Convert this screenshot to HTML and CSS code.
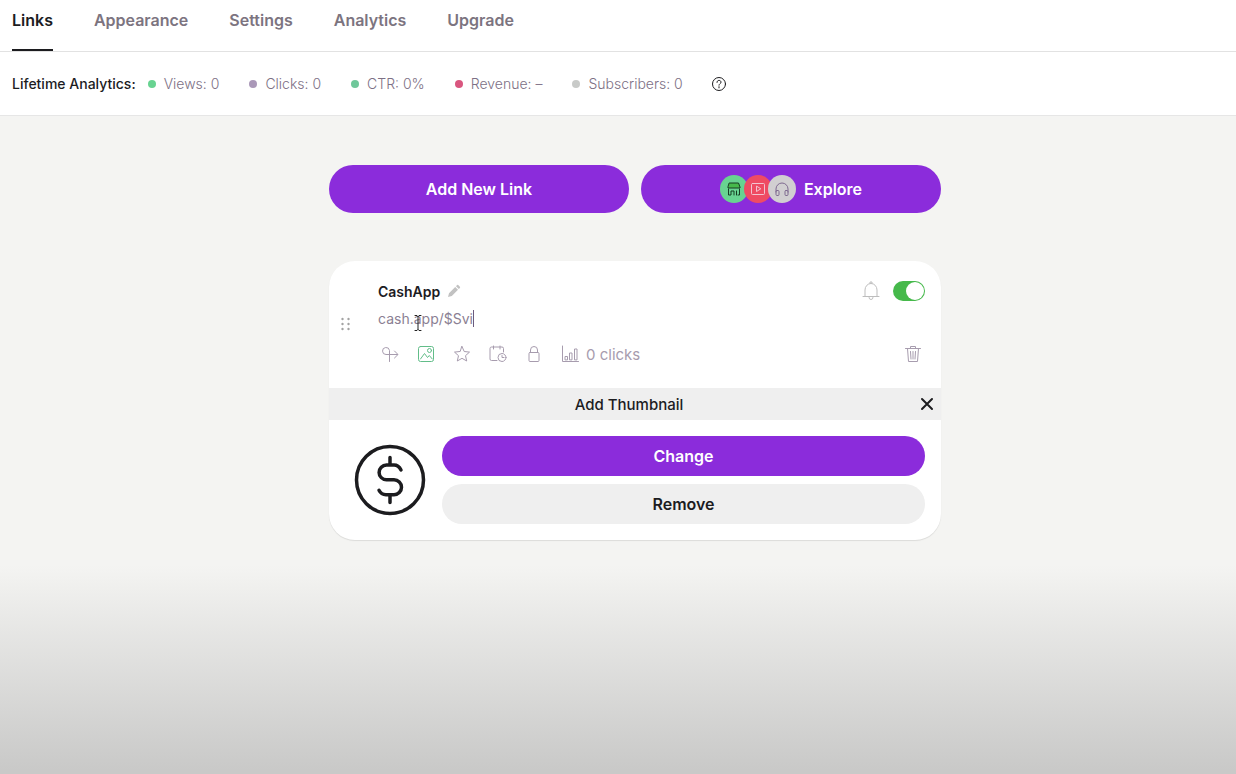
FILE: index.html
```html
<!DOCTYPE html>
<html lang="en">
<head>
    <meta charset="UTF-8">
    <meta name="viewport" content="width=device-width, initial-scale=1.0">
    <title>Links</title>
    <link rel="stylesheet" href="styles.css">
</head>
<body>
    <nav class="tabs">
        <a href="#links" class="active">Links</a>
        <a href="#appearance">Appearance</a>
        <a href="#settings">Settings</a>
        <a href="#analytics">Analytics</a>
        <a href="#upgrade">Upgrade</a>
    </nav>

    <section class="stats">
        <h2>Lifetime Analytics:</h2>
        <ul>
            <li class="green">Views: 0</li>
            <li class="purple">Clicks: 0</li>
            <li class="teal">CTR: 0%</li>
            <li class="red">Revenue: –</li>
            <li class="grey">Subscribers: 0</li>
        </ul>
        <button class="icon-btn help" aria-label="Help">
            <svg width="16" height="16" viewBox="0 0 16 16"><circle cx="8" cy="8" r="6.5"/><path d="M6 6.4C6 5.1 6.9 4.4 8 4.4s2 .7 2 1.8c0 1.4-2 1.5-2 3M8 10.7v1.2"/></svg>
        </button>
    </section>

    <main id="links">
        <div class="actions">
            <button class="btn primary large">Add New Link</button>
            <button class="btn primary large">
                <span class="bubbles">
                    <span class="bubble shop"><svg width="16" height="16" viewBox="0 0 16 16"><path class="awning" d="M3.500 2h9l1.500 4v1H2V6z"/><path d="M2.500 8v6h2.500v-4h3v4M10.500 14v-4M13.500 8v6h-1.500"/></svg></span>
                    <span class="bubble video"><svg width="16" height="16" viewBox="0 0 16 16"><rect x="1.500" y="2.500" width="13" height="11" rx="1"/><path d="M6.500 5.500v5l4-2.500z"/></svg></span>
                    <span class="bubble audio"><svg width="16" height="16" viewBox="0 0 16 16"><path d="M2 11V8a6 6 0 0 1 12 0v3"/><rect x="2" y="9.500" width="3" height="5" rx="1"/><rect x="11" y="9.500" width="3" height="5" rx="1"/></svg></span>
                </span>
                Explore
            </button>
        </div>

        <article class="card">
            <div class="link">
                <button class="icon-btn drag" aria-label="Move link">
                    <svg width="12" height="16" viewBox="0 0 12 16"><circle cx="2.500" cy="3" r="1.200"/><circle cx="8.500" cy="3" r="1.200"/><circle cx="2.500" cy="8" r="1.200"/><circle cx="8.500" cy="8" r="1.200"/><circle cx="2.500" cy="13" r="1.200"/><circle cx="8.500" cy="13" r="1.200"/></svg>
                </button>
                <div class="details">
                    <div class="row title-row">
                        <h3>CashApp</h3>
                        <button class="icon-btn edit" aria-label="Edit title">
                            <svg width="14" height="14" viewBox="0 0 14 14"><path d="M1 13l1-3.800L8.200 3 11 5.800 4.800 12zM9 2.200l1.100-1.100a.8.8 0 0 1 1.100 0l1.700 1.700a.8.8 0 0 1 0 1.100L11.800 5z"/></svg>
                        </button>
                        <button class="icon-btn bell push" aria-label="Notify">
                            <svg width="20" height="22" viewBox="0 0 20 22"><path d="M2 16.500h16M4 16.500V10a6 6.500 0 0 1 12 0v6.500M8 17.500a2 2 0 0 0 4 0M9 3V2h2v1"/></svg>
                        </button>
                        <input type="checkbox" class="toggle" aria-label="Show link" checked>
                    </div>
                    <div class="url">
                        <input type="text" aria-label="Link URL" value="cash.app/$Svi" spellcheck="false">
                        <span class="caret"></span>
                        <svg class="pointer" width="8" height="18" viewBox="0 0 8 18"><path d="M1 1.500h2l1 1 1-1h2M4 2.500v13M1 16.500h2l1-1 1 1h2"/></svg>
                    </div>
                    <div class="row tools">
                        <button class="icon-btn" aria-label="Redirect">
                            <svg width="20" height="20" viewBox="0 0 20 20"><path d="M9.500 17.500V6.500A3.500 3.500 0 1 0 6 10.500H17.500M14.500 7l3.500 3.500-3.500 3.500"/></svg>
                        </button>
                        <button class="icon-btn selected" aria-label="Thumbnail">
                            <svg width="20" height="20" viewBox="0 0 20 20"><rect x="2.500" y="2.500" width="15" height="15" rx="2"/><circle cx="13.500" cy="6.500" r="2"/><path d="M4.500 15l4-5.500 3 4 1.800-2 3 3.500"/></svg>
                        </button>
                        <button class="icon-btn" aria-label="Highlight">
                            <svg width="20" height="20" viewBox="0 0 20 20"><path d="M10 2.500l2.200 5 5.300.6-4 3.600 1.200 5.300-4.700-2.700L5.300 17l1.200-5.300-4-3.600 5.300-.6z"/></svg>
                        </button>
                        <button class="icon-btn" aria-label="Schedule">
                            <svg width="20" height="20" viewBox="0 0 20 20"><path d="M9 16.500H3.500a1.500 1.500 0 0 1-1.500-1.500V4.500A1.500 1.500 0 0 1 3.500 3H14a1.500 1.500 0 0 1 1.500 1.500V8M5.500 2v3M12 2v3"/><circle cx="14" cy="13.500" r="4"/><path d="M14 11.500v2h2"/></svg>
                        </button>
                        <button class="icon-btn" aria-label="Lock">
                            <svg width="20" height="20" viewBox="0 0 20 20"><rect x="5" y="8.500" width="10" height="9" rx="1"/><path d="M6.500 8.500V6a3.500 3.500 0 0 1 7 0v2.500"/></svg>
                        </button>
                        <button class="icon-btn clicks">
                            <svg width="20" height="20" viewBox="0 0 20 20"><path d="M2.500 2v15.500H18.500M5 15.500v-3h2.500v3zM9.500 15.500V9H12v6.500zM14.500 15.500V5H17v10.500z"/></svg>
                            0 clicks
                        </button>
                        <button class="icon-btn push" aria-label="Delete">
                            <svg width="20" height="20" viewBox="0 0 20 20"><path d="M2.500 4.500h15M7.500 4.500v-2h5v2M4.500 4.500l1 13h9l1-13M7.500 7.500l.5 7.500M10 7.500v7.500M12.500 7.500L12 15"/></svg>
                        </button>
                    </div>
                </div>
            </div>

            <div class="panel-head">
                <h4>Add Thumbnail</h4>
                <button class="icon-btn close" aria-label="Close">
                    <svg width="16" height="16" viewBox="0 0 16 16"><path d="M3 3l10 10M13 3L3 13"/></svg>
                </button>
            </div>

            <div class="thumbnail">
                <svg width="88" height="88" viewBox="0 0 88 88"><circle cx="44" cy="44" r="33.500"/><path d="M55 34c-1.500-3-4-5-7-5h-7.500a7.400 7.400 0 0 0 0 14.800h7.500a7.500 7.500 0 0 1 0 15h-8c-3 0-5.500-1.500-7-4.500M44 21.500V29M44 59v7.500"/></svg>
                <div class="buttons">
                    <button class="btn primary">Change</button>
                    <button class="btn">Remove</button>
                </div>
            </div>
        </article>
    </main>
</body>
</html>
```

FILE: styles.css
```css
* {
    box-sizing: border-box;
}
body {
    font-family: Inter, "Liberation Sans", sans-serif;
    margin: 0;
    min-height: 100vh;
    color: #1c1c1f;
    background: linear-gradient(to bottom, #f4f4f2 565px, #c9c9c8 770px) #c9c9c8;
}
h2, h3, h4, ul {
    margin: 0;
    padding: 0;
}
button {
    font-family: inherit;
    cursor: pointer;
}
svg {
    display: block;
    flex: none;
    fill: none;
    stroke: currentColor;
    stroke-linecap: round;
    stroke-linejoin: round;
}

/* Tabs */
.tabs {
    display: flex;
    gap: 41px;
    height: 52px;
    padding: 0 12px;
    background: #fff;
    border-bottom: 1px solid #e2e2e2;
}
.tabs a {
    padding-top: 10px;
    font-size: 16px;
    line-height: 20px;
    font-weight: 600;
    color: #7c7480;
    text-decoration: none;
}
.tabs a.active {
    color: #1c1c1f;
    border-bottom: 2px solid #1c1c1f;
}

/* Stats bar */
.stats {
    display: flex;
    align-items: center;
    height: 64px;
    padding: 0 12px;
    background: #fff;
    border-bottom: 1px solid #e6e6e6;
    font-size: 14px;
}
.stats h2 {
    font-size: 14px;
    font-weight: 500;
    margin-right: 12px;
}
.stats ul {
    display: flex;
    gap: 30px;
    list-style: none;
    font-weight: 300;
}
.stats li {
    display: flex;
    align-items: center;
    gap: 8px;
    color: #7d7085;
}
.stats li::before {
    content: "";
    width: 8px;
    height: 8px;
    border-radius: 50%;
    background: currentColor;
}
.stats .green::before {
    background: #68d391;
}
.stats .purple::before {
    background: #aa98b8;
}
.stats .teal::before {
    background: #6fc79a;
}
.stats .red::before {
    background: #d9567f;
}
.stats .grey::before {
    background: #c8cac8;
}
.stats .help {
    margin-left: 28px;
    color: #1c1c1f;
}

/* Buttons */
.icon-btn {
    display: flex;
    align-items: center;
    justify-content: center;
    padding: 0;
    border: none;
    background: none;
    color: #a79cae;
}
.btn {
    display: flex;
    align-items: center;
    justify-content: center;
    gap: 8px;
    height: 40px;
    border: none;
    border-radius: 24px;
    background: #efefef;
    color: #1c1c1f;
    font-size: 16px;
    font-weight: 600;
}
.btn.primary {
    background: #8b2cdb;
    color: #fff;
}
.btn.large {
    flex: 1;
    height: 48px;
}

/* Main column */
main {
    max-width: 612px;
    margin: 0 auto;
    padding-top: 49px;
    box-sizing: content-box;
    padding-left: 34px;
}
.actions {
    display: flex;
    gap: 12px;
    margin-bottom: 48px;
}
.bubbles {
    display: flex;
}
.bubble {
    display: flex;
    align-items: center;
    justify-content: center;
    width: 28px;
    height: 28px;
    border-radius: 50%;
}
.bubble + .bubble {
    margin-left: -4px;
}
.shop {
    background: #68d391;
    color: #163d22;
}
.shop .awning {
    fill: #46b94b;
}
.video {
    background: #ef4b63;
    color: #f3c3d0;
}
.audio {
    background: #d1cfd1;
    color: #7f6a90;
}

/* Link card */
.card {
    background: #fff;
    border-radius: 26px;
    overflow: hidden;
    box-shadow: 0 1px 1px rgba(0, 0, 0, 0.1);
}
.link {
    display: flex;
    padding: 20px 16px 22px 0;
}
.drag {
    width: 33px;
    margin-right: 16px;
}
.drag svg {
    fill: #a3a3a3;
    stroke: none;
}
.details {
    flex: 1;
    min-width: 0;
}
.row {
    display: flex;
    align-items: center;
}
.title-row {
    height: 20px;
}
.title-row h3 {
    font-size: 14px;
    font-weight: 600;
}
.edit {
    margin-left: 7px;
}
.edit svg {
    fill: #c2c2c2;
    stroke: none;
}
.bell {
    margin-right: 12px;
    color: #bdbdbd;
}
.push {
    margin-left: auto;
}
.toggle {
    appearance: none;
    display: flex;
    width: 32px;
    height: 20px;
    margin: 0;
    padding: 1px;
    border-radius: 10px;
    background: #c2c2c2;
}
.toggle::before {
    content: "";
    width: 18px;
    height: 18px;
    border-radius: 50%;
    background: #fff;
}
.toggle:checked {
    justify-content: flex-end;
    background: #46b94b;
}
.url {
    position: relative;
    margin: 5px 0 12px;
}
.url input {
    display: block;
    width: 100%;
    height: 24px;
    padding: 0;
    border: none;
    outline: none;
    background: none;
    color: #8b7f93;
    font-family: inherit;
    font-size: 14px;
}
.caret {
    position: absolute;
    left: 95px;
    top: 4px;
    width: 1px;
    height: 17px;
    background: #6d5a7c;
}
.pointer {
    position: absolute;
    left: 36px;
    top: 8px;
    color: #222;
}
.tools {
    gap: 12px;
}
.tools .icon-btn {
    min-width: 24px;
    height: 24px;
}
.tools .selected {
    color: #62bd89;
}
.tools .clicks {
    gap: 6px;
    padding-left: 2px;
    font-size: 15px;
}

/* Thumbnail panel */
.panel-head {
    display: flex;
    align-items: center;
    height: 32px;
    padding: 0 6px 0 10px;
    background: #efefef;
}
.panel-head h4 {
    flex: 1;
    text-align: center;
    font-size: 15px;
    font-weight: 500;
}
.close {
    color: #1c1c1f;
}
.close svg {
    stroke-width: 2;
}
.thumbnail {
    display: flex;
    gap: 8px;
    padding: 16px 16px 16px 17px;
}
.thumbnail svg {
    stroke-width: 3.5;
}
.buttons {
    display: flex;
    flex: 1;
    flex-direction: column;
    gap: 8px;
}
```
